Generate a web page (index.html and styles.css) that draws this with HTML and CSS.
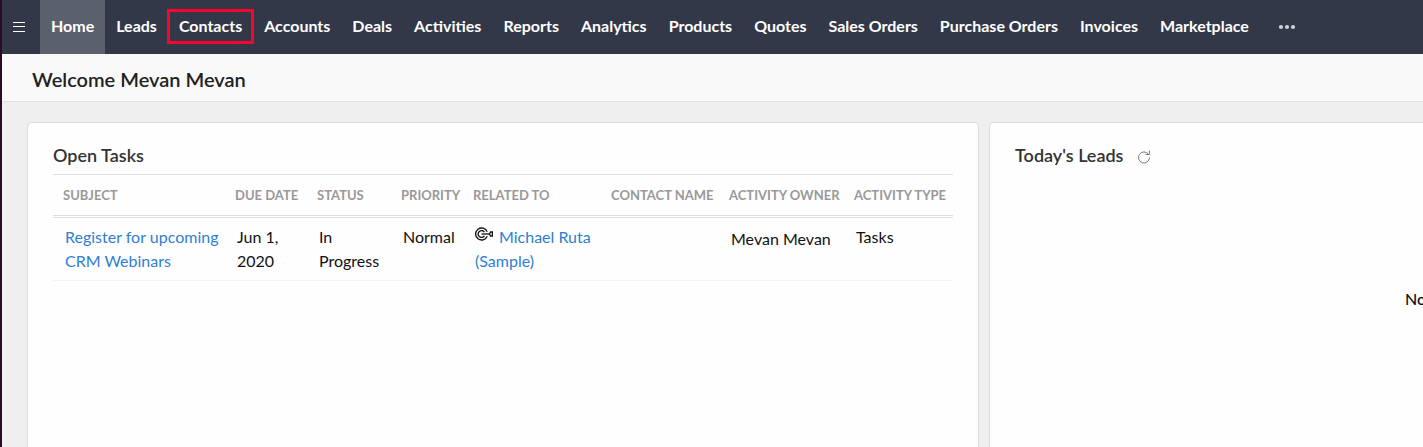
FILE: index.html
```html
<!DOCTYPE html>
<html lang="en">
<head>
<meta charset="utf-8">
<title>Home</title>
<link rel="stylesheet" href="styles.css">
</head>
<body>
<header class="topbar">
  <button class="menu" type="button" aria-label="Menu">
    <svg width="12" height="10" viewBox="0 0 12 10" shape-rendering="crispEdges"><path d="M0 .5h12M0 4.5h12M0 9.5h12" stroke="#fff"/></svg>
  </button>
  <nav class="nav">
    <a class="nav-link active" href="#">Home</a>
    <a class="nav-link" href="#">Leads</a>
    <a class="nav-link marked" href="#">Contacts</a>
    <a class="nav-link" href="#">Accounts</a>
    <a class="nav-link" href="#">Deals</a>
    <a class="nav-link" href="#">Activities</a>
    <a class="nav-link" href="#">Reports</a>
    <a class="nav-link" href="#">Analytics</a>
    <a class="nav-link" href="#">Products</a>
    <a class="nav-link" href="#">Quotes</a>
    <a class="nav-link" href="#">Sales Orders</a>
    <a class="nav-link" href="#">Purchase Orders</a>
    <a class="nav-link" href="#">Invoices</a>
    <a class="nav-link" href="#">Marketplace</a>
  </nav>
  <button class="more" type="button" aria-label="More">
    <svg width="18" height="6" viewBox="0 0 18 6" fill="#cfd1d6"><circle cx="3" cy="3" r="2.1"/><circle cx="9" cy="3" r="2.1"/><circle cx="15" cy="3" r="2.1"/></svg>
  </button>
</header>
<div class="welcome"><h1>Welcome Mevan Mevan</h1></div>
<main class="board">
  <section class="card">
    <h2>Open Tasks</h2>
    <table class="tasks">
      <colgroup><col class="c-subject"><col class="c-date"><col class="c-status"><col class="c-priority"><col class="c-related"><col class="c-contact"><col class="c-owner"><col class="c-type"></colgroup>
      <thead>
        <tr><th>SUBJECT</th><th>DUE DATE</th><th>STATUS</th><th>PRIORITY</th><th>RELATED TO</th><th>CONTACT NAME</th><th>ACTIVITY OWNER</th><th>ACTIVITY TYPE</th></tr>
      </thead>
      <tbody>
        <tr>
          <td><a href="#">Register for upcoming CRM Webinars</a></td>
          <td>Jun 1,<br>2020</td>
          <td>In Progress</td>
          <td>Normal</td>
          <td><svg class="target" width="18" height="14" viewBox="0 0 18 14" fill="none" stroke="#111" stroke-width="1.3"><path d="M12.2 4.8A6 6 0 1 0 12.2 9.2"/><path d="M9.4 5.2A3.4 3.4 0 1 0 9.4 8.8"/><path d="M6.5 7H14.5"/><path d="M14.5 7l1-2h1.9v4h-1.9z"/></svg><a href="#">Michael Ruta<br>(Sample)</a></td>
          <td></td>
          <td class="owner">Mevan Mevan</td>
          <td>Tasks</td>
        </tr>
      </tbody>
    </table>
  </section>
  <section class="card card-last">
    <div class="card-head">
      <h2>Today's Leads</h2>
      <button class="refresh" type="button" aria-label="Refresh">
        <svg width="14" height="14" viewBox="0 0 14 14" fill="none" stroke="#777"><path d="M12.5 7.5A5.5 5.5 0 1 1 11.2 3.9M8.5 4.5h3.9V.6"/></svg>
      </button>
    </div>
    <p class="empty">No</p>
  </section>
</main>
</body>
</html>
```
FILE: styles.css
```css
* { box-sizing: border-box; }
html { height: 100%; overflow: hidden; }
body {
  margin: 0;
  height: 100%;
  display: flex;
  flex-direction: column;
  overflow: hidden;
  border-left: 2px solid #2c0a22;
  background: #efefef;
  color: #111;
  font: 16px/24px Lato, "Liberation Sans", sans-serif;
}
a { color: #2f7fd2; text-decoration: none; }
button { border: 0; padding: 0; background: none; display: flex; align-items: center; }
h1, h2, p { margin: 0; }
.topbar { flex: none; display: flex; height: 54px; background: #323848; }
.menu { width: 38px; padding-left: 11px; }
.nav { display: flex; white-space: nowrap; }
.nav-link {
  position: relative;
  padding: 0 11px;
  color: #fff;
  font-size: 16px;
  font-weight: 700;
  line-height: 52px;
}
.active { background: #5b606d; }
.marked::after {
  content: "";
  position: absolute;
  inset: 9px -1px 10px -1px;
  border: 3px solid #fb0330;
}
.more { margin-left: 18px; }
.welcome { flex: none; padding: 10px 30px 7px; background: #f9f9f9; border-bottom: 1px solid #e2e2e2; }
h1 { font-size: 20px; line-height: 26px; font-weight: 600; color: #222; padding: 2px 0; }
.board {
  flex: 1;
  display: grid;
  grid-template-columns: 68.2% minmax(0, 1fr);
  gap: 10px;
  padding: 20px 0 0 25px;
}
.card {
  padding: 20px 25px;
  background: #fefefe;
  border: 1px solid #dcdcdc;
  border-bottom: 0;
  border-radius: 5px 5px 0 0;
}
.card-last { padding-right: 0; border-right: 0; border-radius: 5px 0 0 0; overflow: hidden; }
h2 { font-size: 18px; line-height: 24px; font-weight: 600; color: #333; }
.card-head { display: flex; align-items: center; gap: 14px; }
.refresh { padding-top: 3px; }
.empty { padding: 120px 0 0 390px; font-weight: 500; }
.tasks { width: 100%; margin-top: 7px; table-layout: fixed; border-collapse: separate; border-spacing: 0; }
.c-subject { width: 172px; }
.c-date { width: 82px; }
.c-status { width: 84px; }
.c-priority { width: 72px; }
.c-related { width: 138px; }
.c-contact { width: 118px; }
.c-owner { width: 125px; }
th {
  padding: 8px 0 8px 10px;
  border-top: 1px solid #dedede;
  border-bottom: 3px double #dedede;
  color: #999;
  font-size: 13px;
  font-weight: 700;
  text-align: left;
  white-space: nowrap;
}
td { padding: 7px 0 7px 12px; border-bottom: 1px solid #f2f2f2; vertical-align: top; }
.owner { padding-top: 9px; }
.target { margin-right: 6px; vertical-align: 2px; }
```
